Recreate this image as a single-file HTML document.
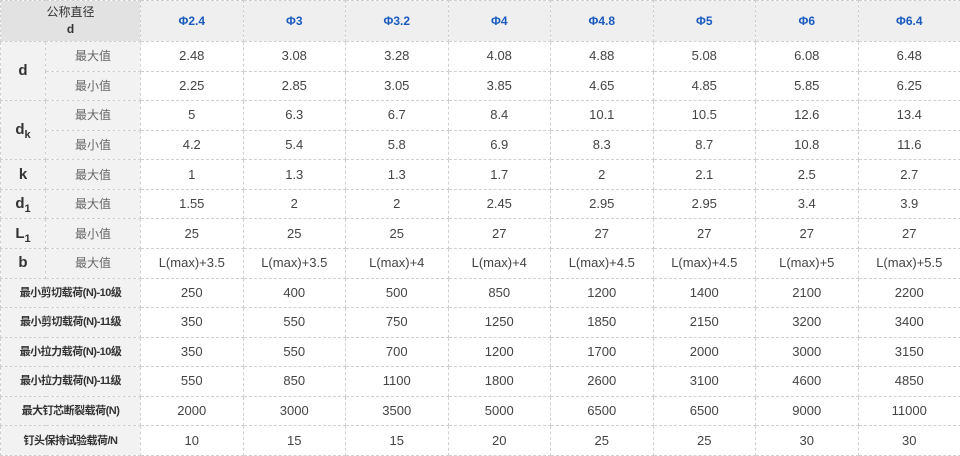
<!DOCTYPE html>
<html><head><meta charset="utf-8"><style>
body{margin:0;background:#fff;}
table{border-collapse:collapse;table-layout:fixed;width:960px;font-family:"Liberation Sans","Noto Sans CJK SC",sans-serif;font-size:13px;color:#444;}
td{border:1px dashed #d0d0d0;text-align:center;padding:0;overflow:hidden;white-space:nowrap;line-height:14px;}
tr{height:29.57px;}
tr.h{height:41px;}
tr.h td{background:#efefef;color:#1a5bbf;font-weight:bold;font-size:12px;}
tr.h td.c0{background:#e2e2e2;color:#333;font-weight:normal;line-height:17px;font-size:12px;}
td.l{background:#f2f2f2;font-weight:bold;font-size:15px;color:#333;}
td.s{background:#f2f2f2;color:#666;font-size:12px;}
td.w{background:#f2f2f2;font-weight:bold;font-size:11px;letter-spacing:-0.5px;color:#333;}
sub{font-size:11px;line-height:0;}
</style></head><body>
<table>
<colgroup><col style="width:45px"><col style="width:95px"><col span="8" style="width:102.5px"></colgroup>
<tr class="h"><td class="c0" colspan="2">公称直径<br><b>d</b></td><td>Φ2.4</td><td>Φ3</td><td>Φ3.2</td><td>Φ4</td><td>Φ4.8</td><td>Φ5</td><td>Φ6</td><td>Φ6.4</td></tr>
<tr><td class="l" rowspan="2">d</td><td class="s">最大值</td><td>2.48</td><td>3.08</td><td>3.28</td><td>4.08</td><td>4.88</td><td>5.08</td><td>6.08</td><td>6.48</td></tr>
<tr><td class="s">最小值</td><td>2.25</td><td>2.85</td><td>3.05</td><td>3.85</td><td>4.65</td><td>4.85</td><td>5.85</td><td>6.25</td></tr>
<tr><td class="l" rowspan="2">d<sub>k</sub></td><td class="s">最大值</td><td>5</td><td>6.3</td><td>6.7</td><td>8.4</td><td>10.1</td><td>10.5</td><td>12.6</td><td>13.4</td></tr>
<tr><td class="s">最小值</td><td>4.2</td><td>5.4</td><td>5.8</td><td>6.9</td><td>8.3</td><td>8.7</td><td>10.8</td><td>11.6</td></tr>
<tr><td class="l">k</td><td class="s">最大值</td><td>1</td><td>1.3</td><td>1.3</td><td>1.7</td><td>2</td><td>2.1</td><td>2.5</td><td>2.7</td></tr>
<tr><td class="l">d<sub>1</sub></td><td class="s">最大值</td><td>1.55</td><td>2</td><td>2</td><td>2.45</td><td>2.95</td><td>2.95</td><td>3.4</td><td>3.9</td></tr>
<tr><td class="l">L<sub>1</sub></td><td class="s">最小值</td><td>25</td><td>25</td><td>25</td><td>27</td><td>27</td><td>27</td><td>27</td><td>27</td></tr>
<tr><td class="l">b</td><td class="s">最大值</td><td>L(max)+3.5</td><td>L(max)+3.5</td><td>L(max)+4</td><td>L(max)+4</td><td>L(max)+4.5</td><td>L(max)+4.5</td><td>L(max)+5</td><td>L(max)+5.5</td></tr>
<tr><td class="w" colspan="2">最小剪切载荷(N)-10级</td><td>250</td><td>400</td><td>500</td><td>850</td><td>1200</td><td>1400</td><td>2100</td><td>2200</td></tr>
<tr><td class="w" colspan="2">最小剪切载荷(N)-11级</td><td>350</td><td>550</td><td>750</td><td>1250</td><td>1850</td><td>2150</td><td>3200</td><td>3400</td></tr>
<tr><td class="w" colspan="2">最小拉力载荷(N)-10级</td><td>350</td><td>550</td><td>700</td><td>1200</td><td>1700</td><td>2000</td><td>3000</td><td>3150</td></tr>
<tr><td class="w" colspan="2">最小拉力载荷(N)-11级</td><td>550</td><td>850</td><td>1100</td><td>1800</td><td>2600</td><td>3100</td><td>4600</td><td>4850</td></tr>
<tr><td class="w" colspan="2">最大钉芯断裂载荷(N)</td><td>2000</td><td>3000</td><td>3500</td><td>5000</td><td>6500</td><td>6500</td><td>9000</td><td>11000</td></tr>
<tr><td class="w" colspan="2">钉头保持试验载荷/N</td><td>10</td><td>15</td><td>15</td><td>20</td><td>25</td><td>25</td><td>30</td><td>30</td></tr>
</table>
</body></html>
